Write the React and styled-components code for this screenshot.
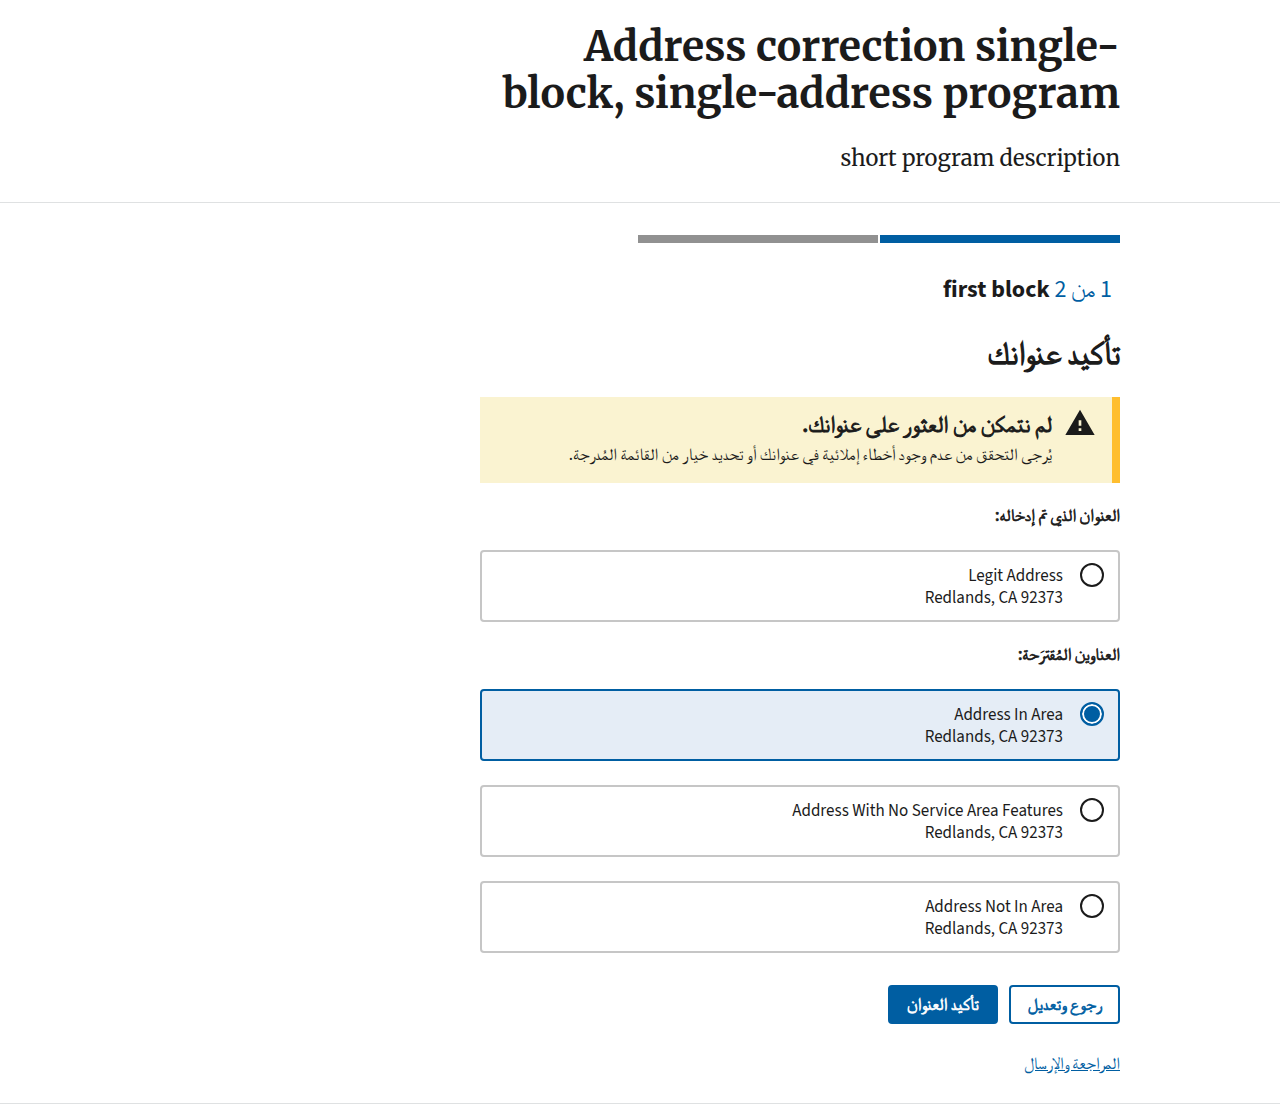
import React, { useState } from "react";
import styled, { createGlobalStyle, css } from "styled-components";

const color = {
  ink: "#1b1b1b",
  primary: "#005ea2",
  primaryTint: "#e5edf6",
  rule: "#dfe1e2",
  cardBorder: "#c6c6c6",
  pending: "#919191",
  warning: "#ffbe2e",
  warningTint: "#faf3d1",
};

const font = {
  body: '"Source Sans 3", FreeSerif, "Noto Sans CJK SC", sans-serif',
  heading: 'Merriweather, "DejaVu Serif Condensed", "DejaVu Serif", serif',
};

// Arabic labels keep the regular letterforms, thickened by a stroke.
const strongArabic = css`
  font-weight: 500;
  -webkit-text-stroke: 0.04em currentColor;
`;

const GlobalStyle = createGlobalStyle`
  *, *::before, *::after { box-sizing: border-box; }
  body {
    margin: 0;
    background: #fff;
    color: ${color.ink};
    font-family: ${font.body};
    font-size: 17px;
    line-height: 22px;
  }
  h1, h2, h3, p, ol, fieldset { margin: 0; padding: 0; }
`;

const Container = styled.div`
  max-width: 1024px;
  margin: 0 auto;
  padding: 0 32px;
`;

const Column = styled.div`
  width: calc(100% * 2 / 3);
  @media (max-width: 640px) { width: 100%; }
`;

const Header = styled.header`
  padding: 23px 0 28px;
  border-bottom: 1px solid ${color.rule};
`;

const ProgramTitle = styled.h1`
  font: bold 41px/47px ${font.heading};
`;

const ProgramDescription = styled.p`
  margin-top: 25px;
  font: 22px/32px ${font.heading};
`;

const Main = styled.main`
  padding: 32px 0 27px;
  border-bottom: 1px solid ${color.rule};
`;

const Segments = styled.ol`
  display: flex;
  gap: 2px;
  list-style: none;
`;

const Segment = styled.li`
  flex: 1 1 0;
  max-width: 240px;
  height: 8px;
  background: ${(p) => (p.$current ? color.primary : color.pending)};
`;

const BlockHeading = styled.h2`
  margin-top: 31px;
  padding: 0 8px;
  font-size: 24px;
  line-height: 32px;
`;

const Counter = styled.span`
  color: ${color.primary};
  font-weight: 400;
`;

const PageHeading = styled.h2`
  ${strongArabic}
  margin-top: 30px;
  font-size: 32px;
  line-height: 36px;
`;

const Alert = styled.div`
  display: flex;
  gap: 12px;
  margin-top: 25px;
  padding: 12px 16px 14px 20px;
  border-inline-start: 8px solid ${color.warning};
  background: ${color.warningTint};
`;

const AlertIcon = styled.svg`
  flex: none;
  width: 32px;
  height: 32px;
  margin-top: -2px;
  fill: currentColor;
`;

const AlertHeading = styled.h3`
  ${strongArabic}
  font-size: 23px;
  line-height: 32px;
`;

const AlertText = styled.p`
  line-height: 28px;
`;

const Group = styled.fieldset`
  display: flex;
  flex-direction: column;
  gap: 24px;
  margin-top: 23px;
  border: 0;
`;

const GroupLabel = styled.legend`
  ${strongArabic}
  float: inline-start;
  padding: 0;
  line-height: 20px;
`;

const Option = styled.label`
  display: flex;
  align-items: flex-start;
  gap: 17px;
  padding: 13px 14px 11px;
  border: 2px solid ${color.cardBorder};
  border-radius: 4px;
  cursor: pointer;
  &:has(input:checked) {
    border-color: ${color.primary};
    background: ${color.primaryTint};
  }
`;

const Radio = styled.input`
  appearance: none;
  flex: none;
  width: 24px;
  height: 24px;
  margin: -2px 0 0;
  border: 2px solid ${color.ink};
  border-radius: 50%;
  background: #fff;
  &:checked {
    border-color: ${color.primary};
    background: ${color.primary};
    box-shadow: inset 0 0 0 2px #fff;
  }
`;

const AddressLine = styled.span`
  display: block;
`;

const Actions = styled.div`
  display: flex;
  gap: 11px;
  margin-top: 32px;
`;

const Button = styled.button`
  padding: 7px 17px 5px;
  border: 2px solid ${color.primary};
  border-radius: 4px;
  background: ${(p) => (p.$outline ? "#fff" : color.primary)};
  color: ${(p) => (p.$outline ? color.primary : "#fff")};
  font: 17px/23px ${font.body};
  ${strongArabic}
  cursor: pointer;
`;

const ReviewLink = styled.a`
  display: block;
  width: fit-content;
  margin-top: 28px;
  color: ${color.primary};
  line-height: 24px;
`;

const entered = [{ id: "legit", line: "Legit Address" }];
const suggested = [
  { id: "in-area", line: "Address In Area" },
  { id: "no-features", line: "Address With No Service Area Features" },
  { id: "not-in-area", line: "Address Not In Area" },
];

function AddressGroup({ label, options, selected, onSelect }) {
  return (
    <Group>
      <GroupLabel>{label}</GroupLabel>
      {options.map((o) => (
        <Option key={o.id} htmlFor={o.id}>
          <Radio
            type="radio"
            id={o.id}
            name="address"
            checked={selected === o.id}
            onChange={() => onSelect(o.id)}
          />
          <span>
            <AddressLine>{o.line}</AddressLine>
            <AddressLine>Redlands, CA 92373</AddressLine>
          </span>
        </Option>
      ))}
    </Group>
  );
}

export default function App() {
  const [selected, setSelected] = useState("in-area");
  return (
    <div dir="rtl" lang="ar">
      <GlobalStyle />
      <Header>
        <Container>
          <Column>
            <ProgramTitle>Address correction single-block, single-address program</ProgramTitle>
            <ProgramDescription>short program description</ProgramDescription>
          </Column>
        </Container>
      </Header>
      <Main>
        <Container>
          <Column>
            <Segments aria-hidden="true">
              <Segment $current />
              <Segment />
            </Segments>
            <BlockHeading>
              <Counter>1 من 2</Counter> first block
            </BlockHeading>
            <PageHeading>تأكيد عنوانك</PageHeading>
            <Alert role="alert">
              <AlertIcon viewBox="0 0 24 24" aria-hidden="true">
                <path d="M1 21h22L12 2 1 21zm12-3h-2v-2h2v2zm0-4h-2v-4h2v4z" />
              </AlertIcon>
              <div>
                <AlertHeading>لم نتمكن من العثور على عنوانك.</AlertHeading>
                <AlertText>
                  يُرجى التحقق من عدم وجود أخطاء إملائية في عنوانك أو تحديد خيار من القائمة المُدرجة.
                </AlertText>
              </div>
            </Alert>
            <form onSubmit={(e) => e.preventDefault()}>
              <AddressGroup
                label="العنوان الذي تم إدخاله:"
                options={entered}
                selected={selected}
                onSelect={setSelected}
              />
              <AddressGroup
                label="العناوين المُقترَحة:"
                options={suggested}
                selected={selected}
                onSelect={setSelected}
              />
              <Actions>
                <Button type="button" $outline>رجوع وتعديل</Button>
                <Button type="submit">تأكيد العنوان</Button>
              </Actions>
            </form>
            <ReviewLink href="#review">المراجعة والإرسال</ReviewLink>
          </Column>
        </Container>
      </Main>
    </div>
  );
}
